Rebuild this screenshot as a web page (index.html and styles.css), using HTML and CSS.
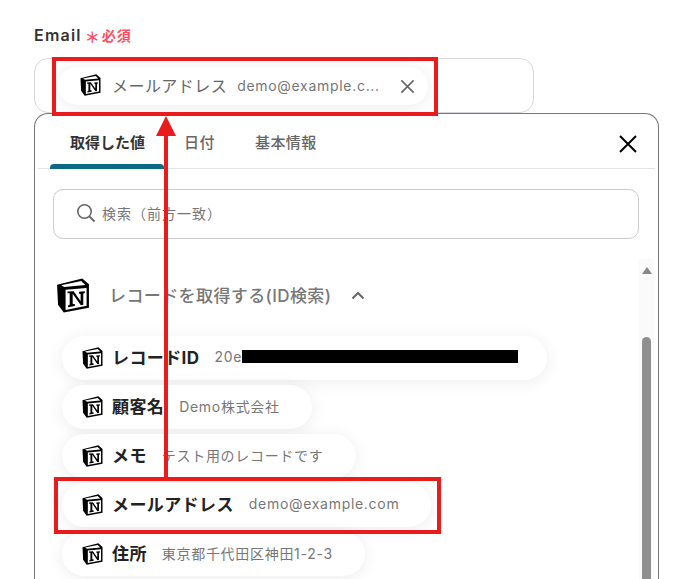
FILE: index.html
```html
<!DOCTYPE html>
<html lang="ja">
<head>
<meta charset="utf-8">
<title>Email</title>
<link rel="stylesheet" href="styles.css">
</head>
<body>
<svg width="0" height="0" class="defs">
  <symbol id="notion" viewBox="0 0 32 34">
    <path d="M0.5 6.5 25 0.5 31.5 6V29L7 33.5 1.5 26Z" fill="#000"/>
    <path d="M4.5 7 24 3 28 6.8 7.5 8.8Z" fill="#fff"/>
    <path d="M8.8 11.5 29.2 9.6V27L8.8 31Z" fill="#fff"/>
    <path d="M10.7 13.2 16.6 12.8 23.4 22.6V15.6L21.9 15.2V13.3L27.4 12.8V14.6L26 15V26.1L23.6 26.5 15.7 15.2V25L17.8 25.5V27.3L11.2 28.5V26.6L12.8 26V14.9L10.7 14.9Z" fill="#000"/>
  </symbol>
</svg>
<main class="page">
  <div class="label"><span>Email</span><span class="star">＊</span><span class="req">必須</span></div>
  <div class="field">
    <div class="chip chip-field">
      <svg class="ic"><use href="#notion"/></svg>
      <span class="chip-name">メールアドレス</span>
      <span class="chip-val">demo@example.c...</span>
      <svg class="chip-x" viewBox="0 0 16 16"><path d="M1.5 1.5 14.5 14.5M14.5 1.5 1.5 14.5" stroke="#666" stroke-width="1.7" fill="none"/></svg>
    </div>
  </div>
  <section class="panel">
    <div class="tabs">
      <div class="tab active">取得した値</div>
      <div class="tab">日付</div>
      <div class="tab">基本情報</div>
      <svg class="close" viewBox="0 0 20 20"><path d="M2 2 18 18M18 2 2 18" stroke="#000" stroke-width="2" fill="none"/></svg>
    </div>
    <div class="search">
      <svg class="glass" viewBox="0 0 20 20"><circle cx="8.5" cy="8.5" r="6.7" stroke="#666" stroke-width="1.6" fill="none"/><path d="M13.5 13.5 18.5 18.5" stroke="#666" stroke-width="1.8"/></svg>
      <span>検索（前方一致）</span>
    </div>
    <div class="body">
      <div class="content">
        <div class="group">
          <svg class="ic-lg"><use href="#notion"/></svg>
          <span class="group-name">レコードを取得する(ID検索)</span>
          <svg class="chev" viewBox="0 0 14 9"><path d="M1.5 7.5 7 2 12.5 7.5" stroke="#666" stroke-width="2" fill="none"/></svg>
        </div>
        <div class="list">
          <div class="chip item"><svg class="ic"><use href="#notion"/></svg><b>レコードID</b><span class="chip-val small">20e</span><span class="mask"></span></div>
          <div class="chip item"><svg class="ic"><use href="#notion"/></svg><b>顧客名</b><span class="chip-val small">Demo株式会社</span></div>
          <div class="chip item"><svg class="ic"><use href="#notion"/></svg><b>メモ</b><span class="chip-val small">テスト用のレコードです</span></div>
          <div class="chip item"><svg class="ic"><use href="#notion"/></svg><b>メールアドレス</b><span class="chip-val small">demo@example.com</span></div>
          <div class="chip item"><svg class="ic"><use href="#notion"/></svg><b>住所</b><span class="chip-val small">東京都千代田区神田1-2-3</span></div>
        </div>
      </div>
      <div class="scroll"><i class="up"></i><i class="thumb"></i></div>
    </div>
  </section>
</main>
<div class="mark mark-top"></div>
<div class="mark mark-low"></div>
<svg class="arrow" viewBox="0 0 20 364"><path d="M10 16V364" stroke="#e81c1c" stroke-width="4"/><path d="M10 0 20 20H0Z" fill="#e81c1c"/></svg>
</body>
</html>
```
FILE: styles.css
```css
* { box-sizing: border-box; }
html, body { margin: 0; height: 579px; overflow: hidden; background: #fff; }
body { position: relative; font-family: Inter, "Noto Sans CJK JP", sans-serif; color: #333; }
.defs { position: absolute; }
.page { padding: 24px 36px 0 34px; }
.label { display: flex; align-items: center; height: 22px; font-size: 16px; font-weight: 600; letter-spacing: 1.2px; color: #333; margin-bottom: 12px; }
.star { color: #ff4d63; font-size: 15px; font-weight: 700; margin: 3px 2px 0 3px; letter-spacing: 0; }
.req { color: #ff4d63; font-size: 14px; font-weight: 700; letter-spacing: 1.2px; }
.field { width: 500px; height: 55px; border: 1px solid #d5d8dc; border-radius: 14px; padding: 8px 0 0 23px; }
.chip { display: flex; align-items: center; background: #fff; border-radius: 22px; box-shadow: 0 2px 16px rgba(0,0,0,.08); }
.chip-field { width: 370px; height: 38px; padding: 0 13px 2px 22px; border-radius: 19px; }
.ic { width: 21px; height: 22px; flex: none; }
.chip-name { font-size: 16px; color: #666; margin-left: 11px; letter-spacing: .45px; }
.chip-val { font-size: 14px; color: #777; margin-left: 10px; letter-spacing: .7px; white-space: nowrap; }
.chip-x { width: 15px; height: 15px; margin-left: auto; margin-top: 2px; }
.panel { width: 625px; height: 520px; border: 1px solid #777; border-radius: 14px 14px 0 0; border-bottom: 0; }
.tabs { display: flex; position: relative; height: 55px; margin: 0 3px 0 3px; border-bottom: 1px solid #e2e4e6; padding-left: 12px; }
.tab { position: relative; height: 55px; padding: 17px 20px 0; font-size: 15px; font-weight: 500; letter-spacing: .4px; color: #666; width: 71px; white-space: nowrap; }
.tab:nth-child(3) { width: 100px; }
.tab.active { width: 114px; color: #333; font-weight: 700; letter-spacing: 0; }
.tab.active::after { content: ""; position: absolute; left: 0; right: 0; bottom: 0; height: 5px; background: #0b6a85; border-radius: 4px 4px 0 0; }
.close { width: 20px; height: 20px; position: absolute; right: 17px; top: 20px; }
.search { display: flex; align-items: center; width: 586px; height: 50px; margin: 20px 0 0 18px; border: 1px solid #ccc; border-radius: 10px; padding: 0 0 2px 22px; font-size: 14px; letter-spacing: 1px; color: #777; }
.glass { width: 20px; height: 20px; margin-right: 6px; }
.body { display: flex; margin: 20px 0 0 18px; }
.content { width: 586px; }
.group { display: flex; align-items: center; height: 34px; margin: 19px 0 0 3px; }
.ic-lg { width: 34px; height: 35px; }
.group-name { font-size: 17px; font-weight: 500; color: #777; margin-left: 19px; letter-spacing: .4px; padding-bottom: 2px; }
.chev { width: 14px; height: 9px; margin-left: 20px; }
.list { display: flex; flex-direction: column; align-items: flex-start; gap: 5px; margin: 24px 0 0 9px; }
.item { height: 44px; padding: 0 32px 4px 20px; }
.item .ic { margin-top: 4px; }
.item b { font-size: 17px; font-weight: 700; color: #222; margin-left: 9px; white-space: nowrap; letter-spacing: .4px; }
.chip-val.small { margin-left: 15px; margin-top: 1px; }
.mask { width: 276px; height: 13px; background: #000; margin: 1px -3px 0 0; }
.scroll { width: 15px; height: 320px; background: #fafafa; position: relative; }
.up { position: absolute; left: 3px; top: 8px; border: 5px solid transparent; border-top: 0; border-bottom: 7px solid #888; }
.thumb { position: absolute; left: 3px; top: 78px; width: 9px; height: 300px; background: #8f8f8f; border-radius: 5px; }
.mark { position: absolute; border: 4px solid #e81c1c; }
.mark-top { left: 52px; top: 57px; width: 386px; height: 59px; }
.mark-low { left: 54px; top: 477px; width: 387px; height: 57px; }
.arrow { position: absolute; left: 156px; top: 116px; width: 20px; height: 364px; }
```
